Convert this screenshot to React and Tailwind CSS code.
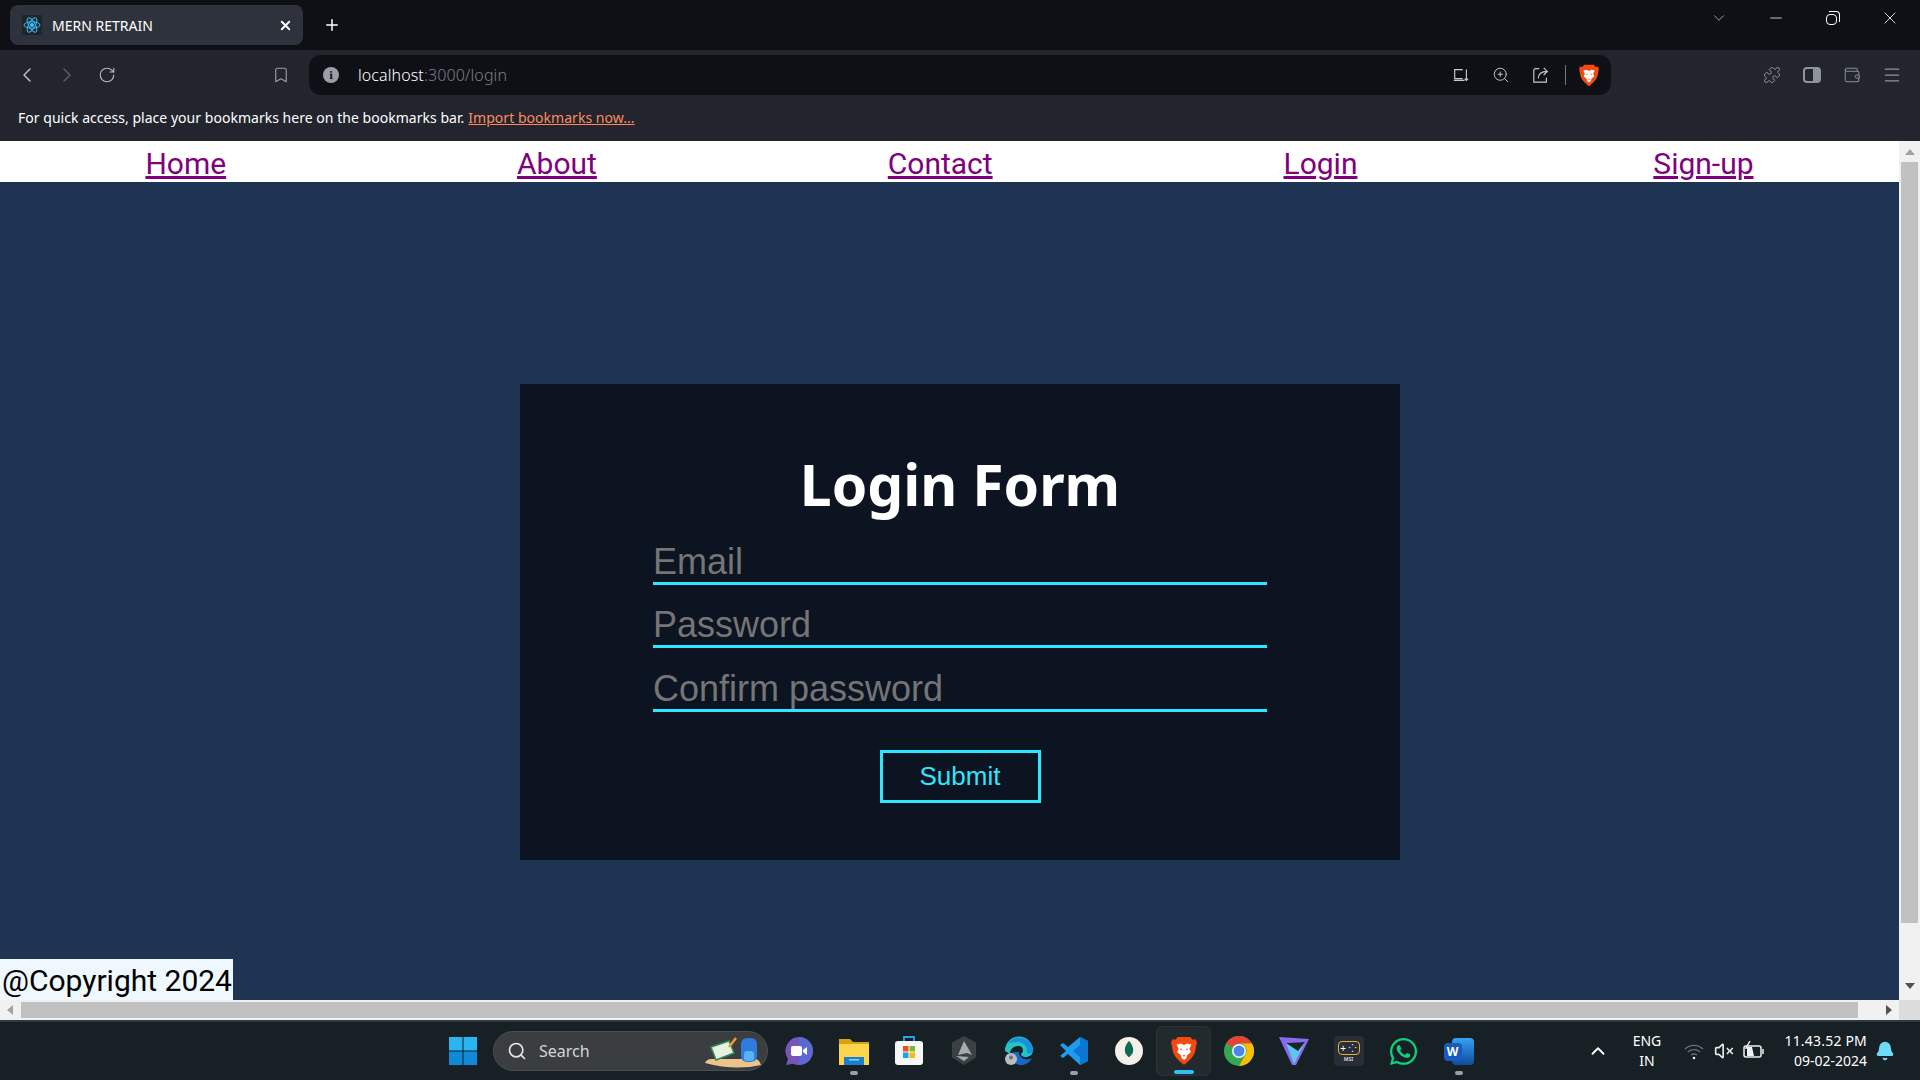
import {
  Bookmark, ChevronDown, ChevronLeft, ChevronRight, ChevronUp, Menu, Minus, Plus, Puzzle,
  RotateCw, Search, VolumeX, Wallet, X, ZoomIn, Bell,
} from 'lucide-react';
import { FaWhatsapp } from 'react-icons/fa';

const segoe = { fontFamily: '"Noto Sans", "Open Sans", sans-serif' };
const pageFont = { fontFamily: 'Roboto, "Noto Sans", sans-serif' };

function ReactLogo() {
  return (
    <svg viewBox="0 0 20 20" className="h-5 w-5 bg-[#20242b]" fill="none" stroke="#38bdf8" strokeWidth="1">
      <ellipse cx="10" cy="10" rx="8" ry="3.2" />
      <ellipse cx="10" cy="10" rx="8" ry="3.2" transform="rotate(60 10 10)" />
      <ellipse cx="10" cy="10" rx="8" ry="3.2" transform="rotate(120 10 10)" />
      <circle cx="10" cy="10" r="1.6" fill="#38bdf8" />
    </svg>
  );
}

function BraveLogo({ size = 24 }) {
  return (
    <svg viewBox="0 0 24 28" width={size} height={size * 1.15}>
      <path d="M6 1h12l2 2.500 3-.5 1 3-1.500 8c-.7 4-5 9-10.500 13C6.500 23 2.200 18 1.500 14L0 6l1-3 3 .5z" fill="#f4490f" />
      <path d="M5 8l4-1 3 1.500L15 7l4 1-2 4 1.500 3-3.500 3-1 3-2 1.500L10 21l-1-3-3.500-3L7 12z" fill="#fff" />
      <path d="M8.500 11.500l2 1-1.500 1zM15.500 11.500l-2 1 1.500 1zM10.500 18h3L12 19.500z" fill="#f4490f" />
    </svg>
  );
}

function TaskCell({ children, dot, active }) {
  return (
    <div className={`relative flex h-[50px] w-[55px] shrink-0 items-center justify-center ${active ? 'rounded-md border border-[#2c3338] bg-[#222a2e]' : ''}`}>
      {children}
      {dot && <span className="absolute bottom-[1px] h-[4px] w-2 rounded-full bg-[#9aa0a3]" />}
      {active && <span className="absolute bottom-[1px] h-[4px] w-5 rounded-full bg-[#33bdf5]" />}
    </div>
  );
}

function Taskbar() {
  return (
    <div className="flex h-[60px] shrink-0 items-center border-t-2 border-[#33383b] bg-[#172024] text-white" style={segoe}>
      <div className="ml-[435px]">
        <TaskCell>
          <svg viewBox="0 0 30 30" className="h-[30px] w-[30px]">
            <path d="M1 1h13.500v13.500H1z" fill="#29b6f0" />
            <path d="M15.500 1H29v13.500H15.500z" fill="#29b6f0" />
            <path d="M1 15.500h13.500V29H1z" fill="#1089d8" />
            <path d="M15.500 15.500H29V29H15.500z" fill="#1089d8" />
          </svg>
        </TaskCell>
      </div>
      <div className="ml-[3px] mr-[3px] flex h-10 w-[275px] shrink-0 items-center rounded-full border border-[#4a4f52] bg-[#3b3e40] pl-[13px]">
        <Search size={20} color="#e5e5e5" />
        <span className="ml-[12px] text-[16px] text-[#d5d5d5]">Search</span>
        <svg viewBox="0 0 56 36" className="ml-auto mr-[6px] h-[36px] w-[56px]">
          <path d="M0 30 Q2 26 6 26 H50 Q54 26 56 32 Q30 38 0 30z" fill="#ebc48c" />
          <path d="M6 14 L24 8 L29 20 L11 27z" fill="#e8f0e0" stroke="#2f8a5f" strokeWidth="1.500" />
          <path d="M24 14 L31 5" stroke="#f29a2e" strokeWidth="2.500" />
          <rect x="36" y="5" width="16" height="24" rx="6" fill="#2f7be0" />
          <rect x="39" y="18" width="10" height="10" rx="3" fill="#58b4f5" />
        </svg>
      </div>
      <TaskCell>
        <svg viewBox="0 0 30 30" className="h-[30px] w-[30px]">
          <path d="M15 1a14 14 0 1 1-6 26.700L2 29l2-6A14 14 0 0 1 15 1z" fill="#7a55b8" />
          <path d="M15 1a14 14 0 0 1 0 28z" fill="#5a6ad0" />
          <rect x="7" y="10" width="11" height="10" rx="2" fill="#fff" />
          <path d="M19 14l4-3v8l-4-3z" fill="#fff" />
        </svg>
      </TaskCell>
      <TaskCell dot>
        <svg viewBox="0 0 30 30" className="h-[30px] w-[30px]">
          <path d="M0 3h11l3 3h16v6H0z" fill="#d9a20f" />
          <path d="M0 8h30v21H0z" fill="#fbd54a" />
          <path d="M5 21h20v8H5z" fill="#1a7fd1" />
          <path d="M10 23h10v1.500H10z" fill="#8bd0f5" />
        </svg>
      </TaskCell>
      <TaskCell>
        <svg viewBox="0 0 30 30" className="h-[30px] w-[30px]">
          <path d="M10 5V1h10v4" fill="none" stroke="#22a7e8" strokeWidth="1.800" />
          <rect x="1" y="5" width="28" height="24" rx="3" fill="#f6f6f6" />
          <path d="M9 10h5.500v5.500H9z" fill="#ea4e1f" />
          <path d="M15.500 10H21v5.500h-5.500z" fill="#7cbb2a" />
          <path d="M9 16.500h5.500V22H9z" fill="#1fa3e8" />
          <path d="M15.500 16.500H21V22h-5.500z" fill="#f9b90c" />
        </svg>
      </TaskCell>
      <TaskCell>
        <svg viewBox="0 0 30 30" className="h-[30px] w-[30px]">
          <path d="M15 0l12 6.500v15L15 29 3 21.500v-15z" fill="#3b4044" />
          <path d="M15 5l8 14-5-2-9 2zM7 20l13 1-5 4z" fill="#a5abae" />
        </svg>
      </TaskCell>
      <TaskCell>
        <svg viewBox="0 0 30 30" className="h-[30px] w-[30px]">
          <path d="M1 15a14 14 0 0 1 28-1c0 5-4 7-7 7-4 0-5-2-5-3 3-2 3-8-3-8-5 0-8 4-8 8z" fill="#24c4c4" />
          <path d="M4 7A14 14 0 0 1 29 14c0 3-3 4-6 3 1-6-3-11-9-11-4 0-7 1-10 1z" fill="#1a8fe0" />
          <path d="M6 18c0 7 7 12 13 11 4-1 7-3 9-7-3 2-8 2-11-1-2-2-2-3-2-5-3 0-7 0-9 2z" fill="#1568c4" />
          <circle cx="7" cy="23" r="6" fill="#b9bcbf" />
          <circle cx="7" cy="21.500" r="2" fill="#6a6e72" />
        </svg>
      </TaskCell>
      <TaskCell dot>
        <svg viewBox="0 0 30 30" className="h-[30px] w-[30px]">
          <path d="M21 1l8 4v20l-8 4L9 18l-5 4-3-2 6-5-6-6 3-2 5 4z" fill="#1f9cf0" />
          <path d="M21 1l8 4v20l-8 4zM21 9l-7 6 7 6z" fill="#0a78d0" fillRule="evenodd" />
        </svg>
      </TaskCell>
      <TaskCell>
        <svg viewBox="0 0 30 30" className="h-[30px] w-[30px]">
          <circle cx="15" cy="15" r="14" fill="#f3f1e8" />
          <path d="M15 5c4 4 5 9 3.500 12.500L15.500 21h-1l-3-3.500C10 14 11 9 15 5z" fill="#0f6a55" />
        </svg>
      </TaskCell>
      <TaskCell active>
        <BraveLogo size={26} />
      </TaskCell>
      <TaskCell>
        <svg viewBox="0 0 30 30" className="h-[30px] w-[30px]">
          <circle cx="15" cy="15" r="15" fill="#34a853" />
          <path d="M15 0a15 15 0 0 1 13 7.500H15a7.500 7.500 0 0 0-6.500 3.750L2 7.500A15 15 0 0 1 15 0z" fill="#e94235" />
          <path d="M28 7.500A15 15 0 0 1 15 30l6.500-11.250A7.500 7.500 0 0 0 15 7.500z" fill="#fbbc04" />
          <circle cx="15" cy="15" r="7" fill="#fff" />
          <circle cx="15" cy="15" r="5.500" fill="#4a86f0" />
        </svg>
      </TaskCell>
      <TaskCell>
        <svg viewBox="0 0 30 30" className="h-[30px] w-[30px]">
          <path d="M0 1l30 2-13 26h-4z" fill="#8a6af0" />
          <path d="M7 7l19-1-11 22z" fill="#5cc8f0" />
          <path d="M7 7l19-1-7 9z" fill="#1c2428" />
        </svg>
      </TaskCell>
      <TaskCell>
        <div className="flex h-[30px] w-[30px] flex-col items-center rounded bg-[#2a2d38] pt-[5px]">
          <div className="flex h-[14px] w-[22px] items-center justify-center rounded-sm border border-[#d8b53a] text-[10px] leading-none text-white">+ ⁘</div>
          <span className="mt-[2px] text-[5px] font-bold leading-none text-[#cfcfcf]">MSI</span>
        </div>
      </TaskCell>
      <TaskCell>
        <FaWhatsapp size={31} color="#12cf7c" />
      </TaskCell>
      <TaskCell dot>
        <div className="relative flex h-[27px] w-[30px] justify-end">
          <div className="h-full w-[22px] rounded-sm bg-gradient-to-b from-[#33a4ef] to-[#134a9e]" />
          <span className="absolute left-0 top-[5px] flex h-[18px] w-[18px] items-center justify-center rounded-sm bg-[#185abd] text-[12px] font-bold text-white">W</span>
        </div>
      </TaskCell>

      <ChevronUp size={22} color="#fff" className="ml-[101px]" />
      <div className="ml-[18px] flex w-[40px] flex-col items-center text-[14px] leading-[20px]">
        <span>ENG</span>
        <span>IN</span>
      </div>
      <svg viewBox="0 0 20 20" fill="none" stroke="#6f7477" strokeWidth="1.300" className="ml-[17px] h-5 w-5">
        <path d="M1 8a13 13 0 0 1 18 0M4 11a9 9 0 0 1 12 0M7 14a5 5 0 0 1 6 0" />
        <circle cx="10" cy="17" r="1.300" fill="#f0f0f0" stroke="none" />
      </svg>
      <VolumeX size={20} color="#e8e8e8" className="ml-[10px]" />
      <svg viewBox="0 0 22 20" fill="none" stroke="#f0f0f0" strokeWidth="1.500" className="ml-[9px] h-5 w-[22px]">
        <rect x="1" y="5" width="17" height="11" rx="2" />
        <path d="M20 8v5" />
        <path d="M9 6H4v9h7z" fill="#f0f0f0" stroke="none" />
        <path d="M7 0L3 7h4l-2 5" strokeWidth="1.400" />
      </svg>
      <div className="ml-3 flex w-[90px] flex-col items-end text-[14px] leading-[20px]">
        <span className="tracking-[0.2px]">11.43.52 PM</span>
        <span>09-02-2024</span>
      </div>
      <Bell size={20} color="#6fdcf7" fill="#6fdcf7" className="ml-2" />
    </div>
  );
}

function BrowserChrome() {
  return (
    <div className="shrink-0 text-white" style={segoe}>
      <div className="flex h-[50px] items-center bg-[#0e1016]">
        <div className="ml-[10px] flex h-10 w-[293px] items-center rounded-lg bg-[#2e323c] pl-3">
          <ReactLogo />
          <span className="ml-[10px] text-[14px]">MERN RETRAIN</span>
          <X size={15} strokeWidth={3} className="ml-auto mr-[10px]" />
        </div>
        <Plus size={18} strokeWidth={2} className="ml-5" />
        <div className="mt-[-14px] flex items-center">
          <ChevronDown size={18} strokeWidth={1} color="#c8c8c8" className="ml-[1369px]" />
          <Minus size={18} strokeWidth={1} className="ml-[39px]" />
          <div className="relative ml-[41px] h-[14px] w-[14px]">
            <span className="absolute bottom-0 left-0 h-[11px] w-[11px] rounded-sm border border-white" />
            <span className="absolute right-0 top-0 h-[11px] w-[11px] rounded-tr-sm border-r border-t border-white" />
          </div>
          <X size={20} strokeWidth={1} className="ml-[40px]" />
        </div>
      </div>
      <div className="flex h-[50px] items-center bg-[#22252e] pl-[7px]">
        <div className="flex w-10 justify-center"><ChevronLeft size={24} strokeWidth={1.5} color="#b8bcc4" /></div>
        <div className="flex w-10 justify-center"><ChevronRight size={24} strokeWidth={1.5} color="#5b5f68" /></div>
        <div className="flex w-10 justify-center"><RotateCw size={18} strokeWidth={1.5} color="#b8bcc4" /></div>
        <div className="ml-[134px] flex w-10 justify-center"><Bookmark size={18} strokeWidth={1.5} color="#9a9ea6" /></div>
        <div className="ml-2 flex h-10 w-[1302px] items-center rounded-xl bg-[#0e1016] pl-[14px]">
          <span className="flex h-4 w-4 items-center justify-center rounded-full bg-[#9a9ea6] font-serif text-[12px] font-bold leading-none text-[#0e1016]">i</span>
          <span className="ml-[19px] text-[16px] font-light tracking-[0.1px]">localhost<span className="text-[#7a7e86]">:3000/login</span></span>
          <div className="ml-auto flex w-10 justify-center">
            <svg viewBox="0 0 20 20" className="h-[18px] w-[18px]" fill="none" stroke="#c4c7cc" strokeWidth="1.300"><path d="M12 4H3v10h9M2 16h12M16 4v12m-2-2l2 2 2-2" /></svg>
          </div>
          <div className="flex w-10 justify-center"><ZoomIn size={18} strokeWidth={1.3} color="#c4c7cc" /></div>
          <div className="flex w-10 justify-center">
            <svg viewBox="0 0 20 20" className="h-[18px] w-[18px]" fill="none" stroke="#c4c7cc" strokeWidth="1.300"><path d="M8 3H3.500L2 4.500V18h14v-5M7 14c0-5 3-8 10-8M13 2l4 4-4 4" /></svg>
          </div>
          <span className="ml-[4px] h-[20px] w-px bg-[#70747c]" />
          <div className="ml-[11px] mr-[10px] flex w-[24px] justify-center"><BraveLogo size={20} /></div>
        </div>
        <div className="ml-[141px] flex w-10 justify-center"><Puzzle size={18} strokeWidth={1.3} color="#8e939c" /></div>
        <div className="flex w-10 justify-center">
          <div className="flex h-[16px] w-[18px] justify-end rounded-sm border-2 border-[#8e939c]"><span className="w-[6px] bg-[#8e939c]" /></div>
        </div>
        <div className="flex w-10 justify-center"><Wallet size={18} strokeWidth={1.3} color="#8e939c" /></div>
        <div className="flex w-10 justify-center"><Menu size={20} strokeWidth={1.5} color="#8e939c" /></div>
      </div>
      <div className="flex h-[41px] items-start bg-[#22252e] pl-[18px] pt-[8px] text-[14px] leading-[20px] tracking-[0.03px]">
        <span>For quick access, place your bookmarks here on the bookmarks bar.</span>
        <span className="ml-1 text-[#ff8a5c] underline">Import bookmarks now...</span>
      </div>
    </div>
  );
}

function Field({ placeholder, className }) {
  return (
    <input
      placeholder={placeholder}
      className={`h-[43px] w-full border-b-[3px] border-[#2ee6ff] bg-transparent text-[36px] leading-none outline-none placeholder:text-[#757575] ${className}`}
      style={{ fontFamily: '"Liberation Sans", sans-serif' }}
    />
  );
}

function Page() {
  return (
    <div className="flex min-w-0 flex-1 flex-col bg-[#1f3453]">
      <nav className="flex h-[41px] shrink-0 items-start justify-around overflow-hidden bg-white text-[30px] leading-[46px] text-[#800080]" style={pageFont}>
        <a href="#" className="underline">Home</a>
        <a href="#" className="underline">About</a>
        <a href="#" className="underline">Contact</a>
        <a href="#" className="mr-[5px] underline">Login</a>
        <a href="#" className="underline">Sign-up</a>
      </nav>
      <div className="ml-[520px] mt-[202px] flex h-[476px] w-[880px] flex-col items-center bg-[#0c1321] pt-[62px]">
        <h1 className="text-[57px] font-bold leading-[76px] text-white" style={segoe}>Login Form</h1>
        <div className="mt-5 w-[614px]">
          <Field placeholder="Email" />
          <Field placeholder="Password" className="mt-5" />
          <Field placeholder="Confirm password" className="mt-[21px]" />
        </div>
        <button
          className="mt-[38px] h-[53px] w-[161px] border-[3px] border-[#2ee6ff] text-[26px] text-[#2ee6ff]"
          style={{ fontFamily: '"Liberation Sans", sans-serif' }}
        >
          Submit
        </button>
      </div>
      <footer className="mt-auto h-[41px] w-[233px] whitespace-nowrap bg-[#f0f8ff] pl-[2px] text-[30px] leading-[43px] text-black" style={pageFont}>
        @Copyright 2024
      </footer>
    </div>
  );
}

export default function App() {
  return (
    <div className="flex h-screen w-screen flex-col overflow-hidden">
      <BrowserChrome />
      <div className="flex min-h-0 flex-1">
        <div className="flex min-w-0 flex-1 flex-col">
          <Page />
          <div className="flex h-[20px] shrink-0 items-center bg-[#f1f1f1] pl-[7px]">
            <span className="h-0 w-0 border-y-[5px] border-r-[6px] border-y-transparent border-r-[#a3a3a3]" />
            <span className="ml-2 h-4 w-[1837px] bg-[#c1c1c1]" />
            <span className="ml-auto mr-[7px] h-0 w-0 border-y-[5px] border-l-[6px] border-y-transparent border-l-[#505050]" />
          </div>
        </div>
        <div className="flex w-[21px] shrink-0 flex-col items-center bg-[#f1f1f1]">
          <span className="mt-[8px] h-0 w-0 border-x-[5px] border-b-[6px] border-x-transparent border-b-[#a3a3a3]" />
          <span className="mt-[7px] h-[761px] w-[17px] bg-[#c1c1c1]" />
          <span className="mt-[60px] h-0 w-0 border-x-[5px] border-t-[6px] border-x-transparent border-t-[#505050]" />
          <span className="mt-auto h-[20px] w-full bg-[#dcdcdc]" />
        </div>
      </div>
      <Taskbar />
    </div>
  );
}
